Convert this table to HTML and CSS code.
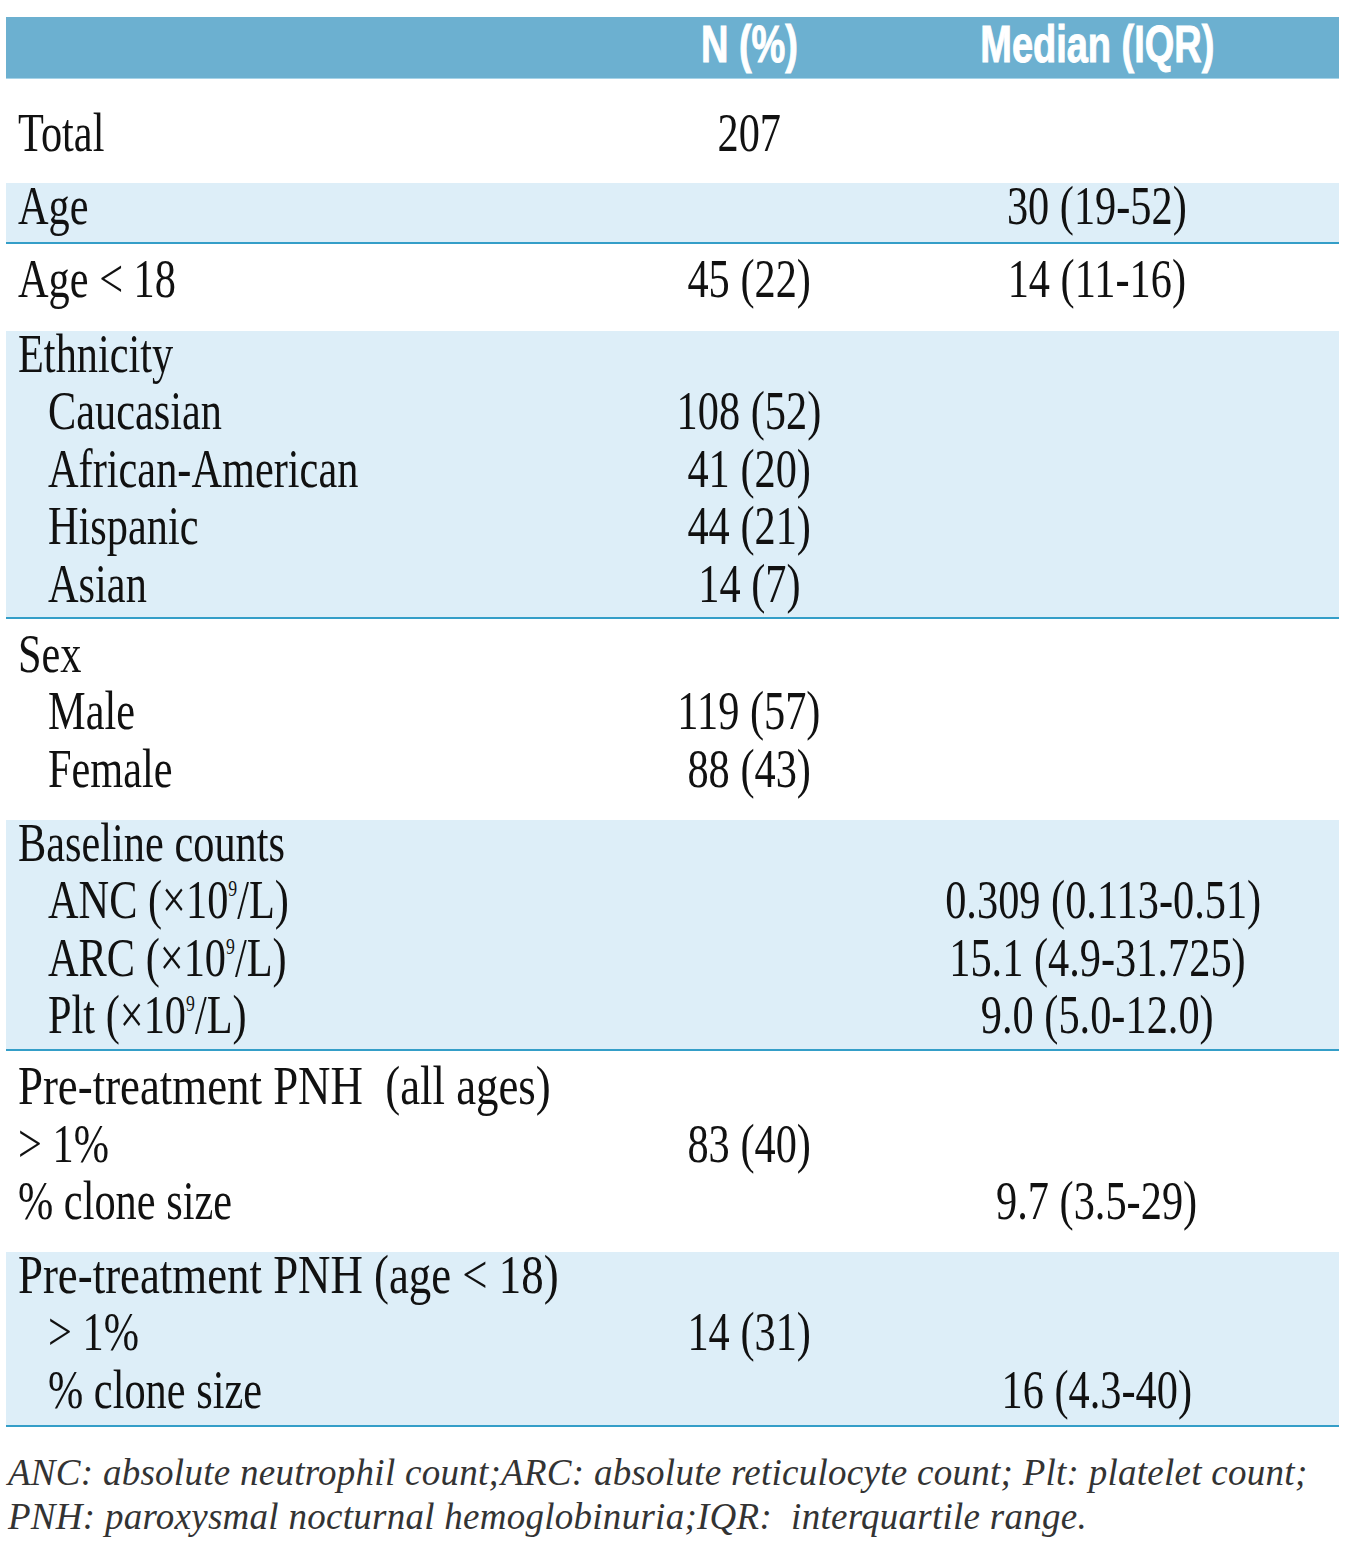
FILE: index.html
```html
<!DOCTYPE html>
<html lang="en">
<head>
<meta charset="utf-8">
<title>Patient characteristics</title>
<link rel="stylesheet" href="styles.css">
</head>
<body>
<div class="page">
  <div class="table">
    <div class="row head">
      <div class="l"></div>
      <div class="c"><span class="h">N (%)</span></div>
      <div class="c"><span class="h">Median (IQR)</span></div>
    </div>

    <div class="blk b-total">
      <div class="row"><div class="l"><span class="t">Total</span></div><div class="c"><span class="t">207</span></div><div class="c"></div></div>
    </div>

    <div class="blk light lined b-age">
      <div class="row"><div class="l"><span class="t">Age</span></div><div class="c"></div><div class="c"><span class="t">30 (19-52)</span></div></div>
    </div>

    <div class="blk b-age18">
      <div class="row"><div class="l"><span class="t">Age &lt; 18</span></div><div class="c"><span class="t">45 (22)</span></div><div class="c"><span class="t">14 (11-16)</span></div></div>
    </div>

    <div class="blk light lined b-eth">
      <div class="row"><div class="l span"><span class="t">Ethnicity</span></div></div>
      <div class="row"><div class="l sub"><span class="t">Caucasian</span></div><div class="c"><span class="t">108 (52)</span></div><div class="c"></div></div>
      <div class="row"><div class="l sub"><span class="t">African-American</span></div><div class="c"><span class="t">41 (20)</span></div><div class="c"></div></div>
      <div class="row"><div class="l sub"><span class="t">Hispanic</span></div><div class="c"><span class="t">44 (21)</span></div><div class="c"></div></div>
      <div class="row"><div class="l sub"><span class="t">Asian</span></div><div class="c"><span class="t">14 (7)</span></div><div class="c"></div></div>
    </div>

    <div class="blk b-sex">
      <div class="row"><div class="l span"><span class="t">Sex</span></div></div>
      <div class="row"><div class="l sub"><span class="t">Male</span></div><div class="c"><span class="t">119 (57)</span></div><div class="c"></div></div>
      <div class="row"><div class="l sub"><span class="t">Female</span></div><div class="c"><span class="t">88 (43)</span></div><div class="c"></div></div>
    </div>

    <div class="blk light lined b-base">
      <div class="row"><div class="l span"><span class="t">Baseline counts</span></div></div>
      <div class="row"><div class="l sub"><span class="t">ANC (×10<sup class="sup">9</sup>/L)</span></div><div class="c"></div><div class="c"><span class="t">0.309 (0.113-0.51)</span></div></div>
      <div class="row"><div class="l sub"><span class="t">ARC (×10<sup class="sup">9</sup>/L)</span></div><div class="c"></div><div class="c"><span class="t">15.1 (4.9-31.725)</span></div></div>
      <div class="row"><div class="l sub"><span class="t">Plt (×10<sup class="sup">9</sup>/L)</span></div><div class="c"></div><div class="c"><span class="t">9.0 (5.0-12.0)</span></div></div>
    </div>

    <div class="blk b-pre">
      <div class="row"><div class="l span"><span class="t wide">Pre-treatment PNH &nbsp;(all ages)</span></div></div>
      <div class="row"><div class="l"><span class="t">&gt; 1%</span></div><div class="c"><span class="t">83 (40)</span></div><div class="c"></div></div>
      <div class="row"><div class="l"><span class="t">% clone size</span></div><div class="c"></div><div class="c"><span class="t">9.7 (3.5-29)</span></div></div>
    </div>

    <div class="blk light lined b-pre18">
      <div class="row"><div class="l span"><span class="t wide">Pre-treatment PNH (age &lt; 18)</span></div></div>
      <div class="row"><div class="l sub"><span class="t">&gt; 1%</span></div><div class="c"><span class="t">14 (31)</span></div><div class="c"></div></div>
      <div class="row"><div class="l sub"><span class="t">% clone size</span></div><div class="c"></div><div class="c"><span class="t">16 (4.3-40)</span></div></div>
    </div>
  </div>

  <p class="note">ANC: absolute neutrophil count;ARC: absolute reticulocyte count; Plt: platelet count;<br>PNH: paroxysmal nocturnal hemoglobinuria;IQR: &nbsp;interquartile range.</p>
</div>
</body>
</html>
```

FILE: styles.css
```css
html, body {
  margin: 0;
  padding: 0;
  background: #ffffff;
}

.page {
  padding: 17px 12px 0 6px;
  width: 1333px;
}

.table {
  width: 1333px;
  font-family: "Liberation Serif", "Times New Roman", serif;
  font-size: 55px;
  color: #111111;
}

.row {
  display: grid;
  grid-template-columns: 582px 298px 398px;
  padding: 0 43px 0 12px;
  height: 46px;
  line-height: 46px;
}

.head {
  height: 54px;
  line-height: 54px;
  padding-bottom: 7px;
  background: #6cb0d0;
  border-bottom: 1px solid #a6d3e8;
  font-family: "Liberation Sans", Arial, sans-serif;
  font-weight: bold;
  font-size: 52px;
  color: #ffffff;
}

.l {
  text-align: left;
  white-space: nowrap;
}

.l.span {
  grid-column: 1 / -1;
}

.l.sub {
  padding-left: 30px;
}

.c {
  text-align: center;
  white-space: nowrap;
}

.t,
.h {
  display: inline-block;
  white-space: nowrap;
}

.t {
  transform: scaleX(0.77);
}

.t.wide {
  transform: scaleX(0.815);
}

.h {
  transform: scaleX(0.73);
  -webkit-text-stroke: 1px #ffffff;
}

.l .t {
  transform-origin: left center;
}

.c .t,
.c .h {
  transform-origin: center center;
}

.sup {
  font-size: 0.42em;
  line-height: 0;
  vertical-align: 0.95em;
}

.blk {
  display: flex;
  flex-direction: column;
  gap: 11.4px;
}

.light {
  background: #ddeef8;
}

.lined {
  border-bottom: 2px solid #349ec8;
}

.b-total { padding: 31px 0 27px; }
.b-age { padding: 0 0 13px; }
.b-age18 { padding: 12px 0 29px; }
.b-eth { padding: 0 0 10.4px; }
.b-sex { padding: 12px 0 28.2px; }
.b-base { padding: 0 0 10.8px; }
.b-pre { padding: 12.4px 0 27.8px; }
.b-pre18 { padding: 0 0 12.2px; }

.note {
  margin: 24px 0 0;
  padding-left: 2px;
  font-family: "Liberation Serif", "Times New Roman", serif;
  font-style: italic;
  font-size: 37px;
  line-height: 44px;
  letter-spacing: 0.27px;
  color: #333333;
  white-space: nowrap;
}
```
